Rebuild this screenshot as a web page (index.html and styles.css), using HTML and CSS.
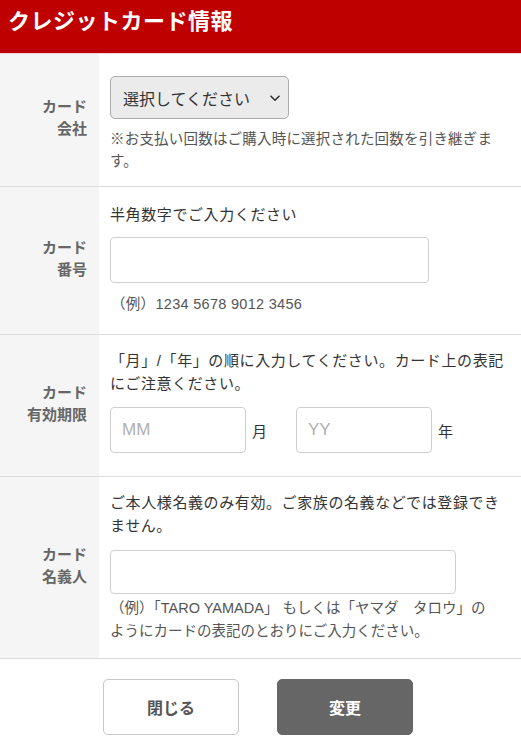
FILE: index.html
```html
<!DOCTYPE html>
<html lang="ja">
<head>
<meta charset="utf-8">
<title>クレジットカード情報</title>
<link rel="stylesheet" href="styles.css">
</head>
<body>
<header class="header"><h1 class="title">クレジットカード情報</h1></header>
<main class="form">
  <div class="row row-company">
    <div class="label">カード<br>会社</div>
    <div class="field">
      <div class="select">
        <span>選択してください</span>
        <svg class="chev" width="10" height="7" viewBox="0 0 10 7"><path d="M1 1.2 L5 5.2 L9 1.2" fill="none" stroke="#333" stroke-width="1.6" stroke-linecap="round" stroke-linejoin="round"/></svg>
      </div>
      <p class="note">※お支払い回数はご購入時に選択された回数を引き継ぎます。</p>
    </div>
  </div>
  <div class="row row-number">
    <div class="label">カード<br>番号</div>
    <div class="field">
      <p class="lead">半角数字でご入力ください</p>
      <div class="input input-number"></div>
      <p class="example ex-number">（例）1234 5678 9012 3456</p>
    </div>
  </div>
  <div class="row row-expiry">
    <div class="label">カード<br>有効期限</div>
    <div class="field">
      <p class="lead">「月」/「年」の順に入力してください。カード上の表記にご注意ください。</p>
      <div class="expiry">
        <div class="input input-short"><span class="ph">MM</span></div>
        <span class="unit">月</span>
        <div class="input input-short"><span class="ph">YY</span></div>
        <span class="unit">年</span>
      </div>
    </div>
  </div>
  <div class="row row-name">
    <div class="label">カード<br>名義人</div>
    <div class="field">
      <p class="lead">ご本人様名義のみ有効。ご家族の名義などでは登録できません。</p>
      <div class="input input-name"></div>
      <p class="example ex-name">（例）「TARO YAMADA」 もしくは「ヤマダ　タロウ」の<span class="nowrap">ように</span>カードの表記のとおりにご入力ください。</p>
    </div>
  </div>
</main>
<div class="actions">
  <button class="btn btn-close">閉じる</button>
  <button class="btn btn-change">変更</button>
</div>
</body>
</html>
```
FILE: styles.css
```css
* { box-sizing: border-box; }
html, body { margin: 0; padding: 0; }
body {
  width: 521px;
  background: #fff;
  font-family: "Liberation Sans", "Noto Sans CJK JP", sans-serif;
  color: #333;
  font-size: 15px;
}
.header {
  background: #bf0000;
  height: 54px;
  padding: 9px 0 0 8px;
  border-bottom: 1px solid #e9d6d6;
}
.title {
  margin: 0;
  color: #fff;
  font-size: 22px;
  line-height: 26px;
  font-weight: 700;
  letter-spacing: 0.5px;
}
.row {
  display: grid;
  grid-template-columns: 99px 1fr;
  border-bottom: 1px solid #dcdcdc;
}
.label {
  background: #f5f5f5;
  display: flex;
  align-items: center;
  justify-content: flex-end;
  text-align: right;
  padding-right: 12px;
  font-size: 15px;
  line-height: 22px;
  font-weight: 700;
  color: #666;
  padding-bottom: 4px;
}
.field {
  padding: 14px 10px 15px 11px;
}
.row-company .field { padding-top: 22px; padding-bottom: 14px; }
.row-number .field { padding-top: 16px; padding-bottom: 18px; }
.row-expiry .field { padding-top: 14px; padding-bottom: 23px; }
.row-name .field { padding-top: 14px; padding-bottom: 15px; }
p { margin: 0; }
.select {
  width: 179px;
  height: 43px;
  background: #ebebeb;
  border: 1px solid #ababab;
  border-radius: 5px;
  display: flex;
  align-items: center;
  justify-content: space-between;
  padding: 0 8px 0 12px;
  font-size: 16px;
  color: #333;
}
.chev { margin-top: 2px; }
.note {
  margin-top: 9px;
  font-size: 14.5px;
  line-height: 22px;
  color: #555;
  letter-spacing: 0.2px;
}
.lead {
  font-size: 15px;
  line-height: 23px;
  color: #333;
  letter-spacing: 0.6px;
}
.input {
  background: #fff;
  border: 1px solid #cfcfcf;
  border-radius: 4px;
  display: flex;
  align-items: center;
  padding-left: 11px;
}
.input-number { width: 319px; height: 46px; margin-top: 11px; }
.input-name { width: 346px; height: 44px; margin-top: 13px; }
.input-short { width: 136px; height: 46px; }
.ph { color: #b0b0b0; font-size: 17px; }
.expiry {
  margin-top: 12px;
  display: flex;
  align-items: center;
}
.unit {
  font-size: 15px;
  color: #333;
  margin-left: 6px;
  width: 44px;
}
.example {
  font-size: 14.5px;
  line-height: 23px;
  color: #555;
  letter-spacing: 0.3px;
}
.ex-number { margin-top: 10px; padding-left: 1px; }
.ex-name { margin-top: 3px; letter-spacing: 0; }
.nowrap { white-space: nowrap; }
.actions {
  display: flex;
  justify-content: center;
  gap: 38px;
  padding: 20px 0 0 0;
  margin-left: -5px;
}
.btn {
  width: 136px;
  height: 56px;
  border-radius: 5px;
  font-family: "Noto Sans CJK JP", sans-serif;
  font-size: 16px;
  font-weight: 700;
}
.btn-close {
  background: #fff;
  border: 1px solid #c8c8c8;
  color: #555;
}
.btn-change {
  background: #666;
  border: 1px solid #666;
  color: #fff;
}
```
